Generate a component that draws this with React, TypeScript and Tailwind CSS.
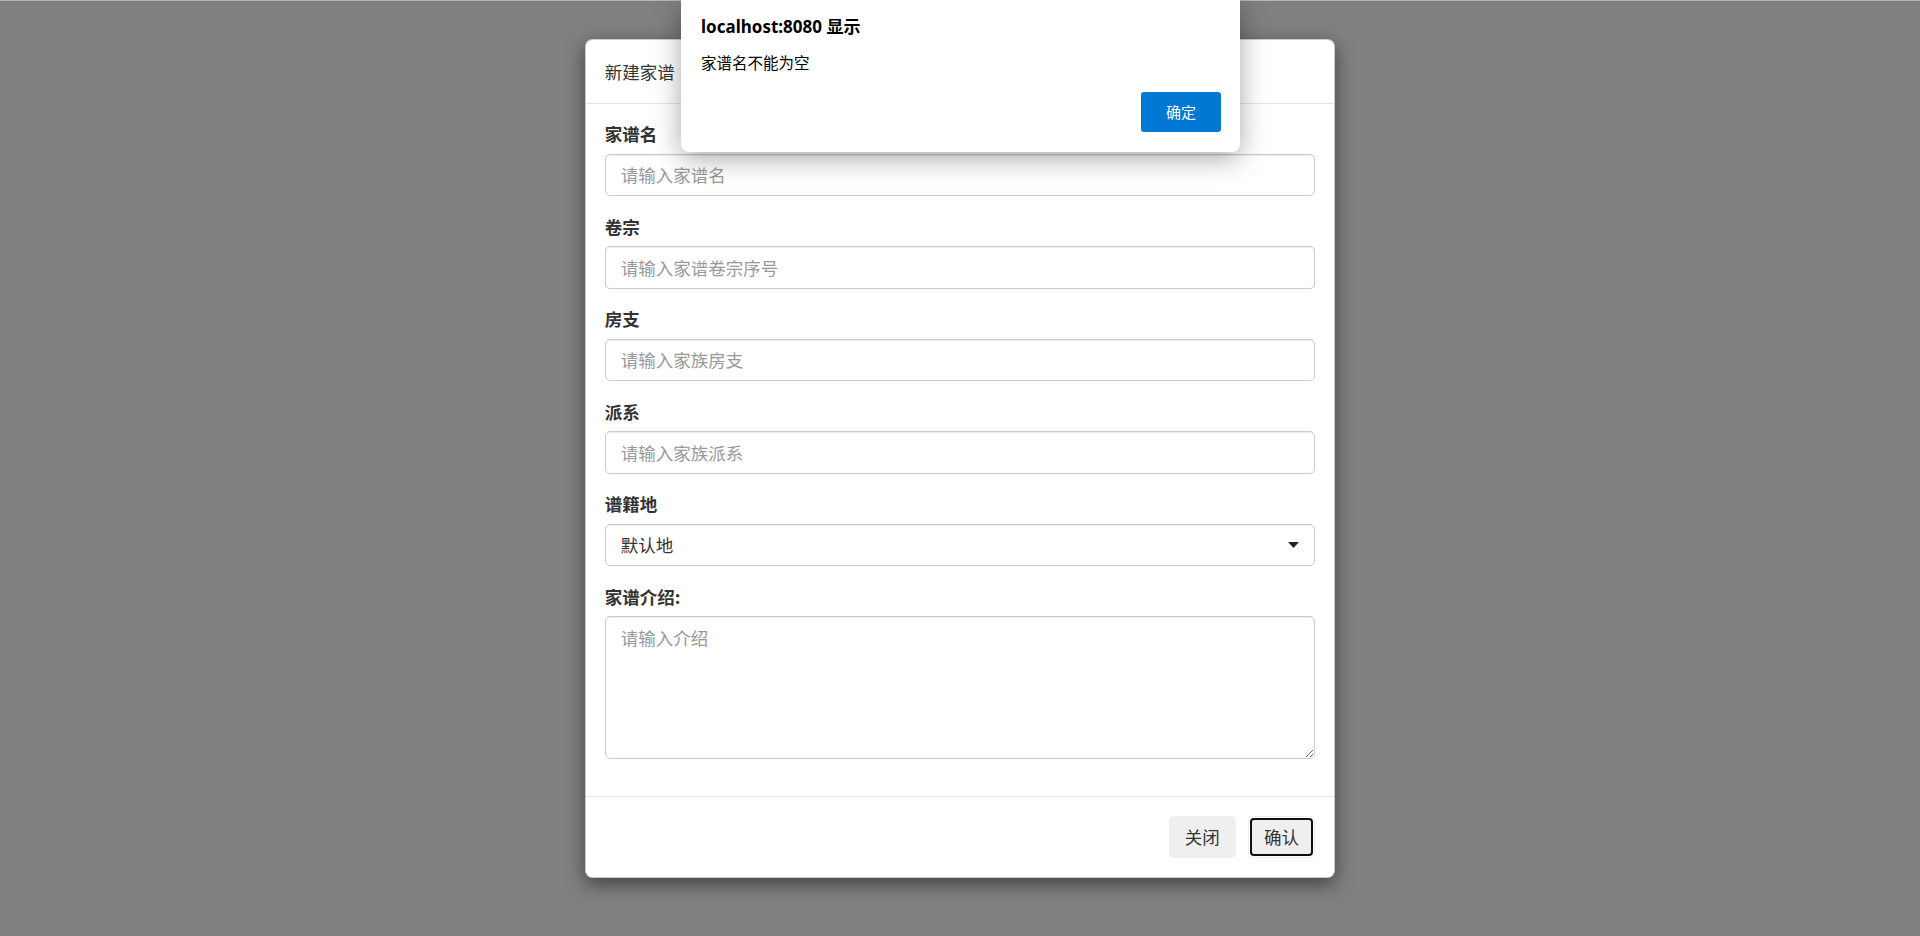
import React from 'react';

const cjk = { fontFamily: '"Noto Sans CJK SC", "Noto Sans", sans-serif' };

interface FieldProps {
    label: string;
    placeholder: string;
}

const Field: React.FC<FieldProps> = ({ label, placeholder }) => (
    <div className="mb-[18.75px]">
        <label className="block text-[17.5px] leading-[24px] font-bold text-[#333] mb-[7.25px]">{label}</label>
        <input
            placeholder={placeholder}
            className="block w-full h-[42.5px] px-[15px] text-[17.5px] text-[#555] border-[1.25px] border-[#ccc] rounded-[5px] bg-white shadow-[inset_0_1px_1px_rgba(0,0,0,0.075)] placeholder:text-[#999] outline-none"
            style={cjk}
        />
    </div>
);

const App: React.FC = () => {
    return (
        <div className="relative w-full h-[936px] bg-[#808080] overflow-hidden" style={cjk}>
            <div className="h-px bg-[#b5b5b5]" />
            {/* modal */}
            <div className="flex justify-center pt-[38px]">
                <div className="w-[750px] bg-white border-[1.25px] border-[rgba(0,0,0,0.2)] rounded-[7.5px] shadow-[0_6px_19px_rgba(0,0,0,0.5)]">
                    <div className="p-[18.75px] border-b-[1.25px] border-[#e5e5e5]">
                        <div className="text-[17.5px] leading-[25px] text-[#333]">新建家谱</div>
                    </div>

                    <div className="p-[18.75px]">
                        <Field label="家谱名" placeholder="请输入家谱名" />
                        <Field label="卷宗" placeholder="请输入家谱卷宗序号" />
                        <Field label="房支" placeholder="请输入家族房支" />
                        <Field label="派系" placeholder="请输入家族派系" />

                        <div className="mb-[18.75px]">
                            <label className="block text-[17.5px] leading-[24px] font-bold text-[#333] mb-[7.25px]">谱籍地</label>
                            <div className="flex items-center justify-between h-[42.5px] px-[15px] border-[1.25px] border-[#ccc] rounded-[5px] bg-white shadow-[inset_0_1px_1px_rgba(0,0,0,0.075)]">
                                <span className="text-[17.5px] text-[#333]">默认地</span>
                                <svg width="11" height="6" viewBox="0 0 11 6">
                                    <path d="M0 0 H11 L5.5 6 Z" fill="#222" />
                                </svg>
                            </div>
                        </div>

                        <div className="mb-[18.75px]">
                            <label className="block text-[17.5px] leading-[24px] font-bold text-[#333] mb-[7.25px]">家谱介绍:</label>
                            <textarea
                                placeholder="请输入介绍"
                                className="block w-full h-[142.5px] px-[15px] py-[7.5px] text-[17.5px] leading-[25px] text-[#555] border-[1.25px] border-[#ccc] rounded-[5px] bg-white shadow-[inset_0_1px_1px_rgba(0,0,0,0.075)] placeholder:text-[#999] outline-none resize-y"
                                style={cjk}
                            />
                        </div>
                    </div>

                    <div className="flex justify-end gap-[11.75px] p-[18.75px] border-t-[1.25px] border-[#e5e5e5]">
                        <button className="h-[42.5px] w-[67.5px] rounded-[5px] bg-[#efefef] text-[17.5px] text-[#333]">关闭</button>
                        <button className="relative h-[42.5px] w-[67.5px] rounded-[5px] bg-[#efefef] text-[17.5px] text-[#333]">
                            <span className="absolute inset-[1.5px] rounded-[4px] border border-white" />
                            <span className="absolute inset-[2.5px] rounded-[4px] border-2 border-[#101010]" />
                            <span className="relative">确认</span>
                        </button>
                    </div>
                </div>
            </div>

            {/* browser alert */}
            <div
                className="absolute left-[681px] top-0 w-[559px] bg-white rounded-b-[8px] shadow-[0_6px_28px_rgba(0,0,0,0.35)] px-[20px] pt-[16px] pb-[20px]"
                style={{ fontFamily: '"Noto Sans", "Noto Sans CJK SC", sans-serif' }}
            >
                <div className="text-[17px] leading-[22px] font-bold text-black">localhost:8080 显示</div>
                <div className="mt-[13px] text-[15.5px] leading-[22px] text-black" style={cjk}>家谱名不能为空</div>
                <div className="flex justify-end mt-[19px] -mr-[1px]">
                    <button className="w-[80px] h-[40px] rounded-[3px] bg-[#0078d4] text-white text-[15px]" style={cjk}>确定</button>
                </div>
            </div>
        </div>
    );
};

export default App;
